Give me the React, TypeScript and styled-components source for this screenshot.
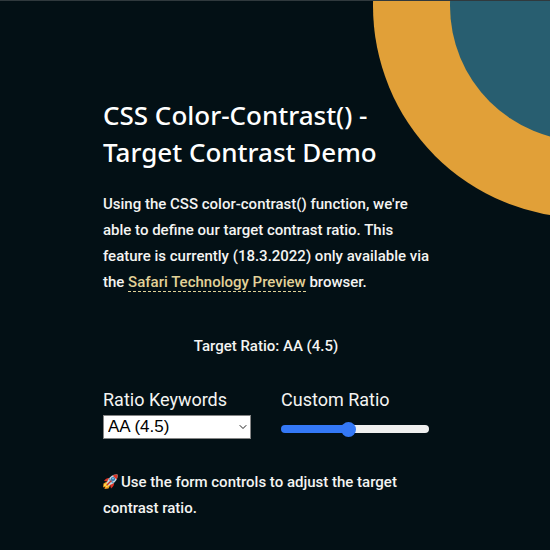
import React, { useState } from "react";
import styled, { createGlobalStyle } from "styled-components";
import { ChevronDown } from "lucide-react";

const GlobalStyle = createGlobalStyle`
  *, *::before, *::after { box-sizing: border-box; }
  body {
    margin: 0;
    background: #031015;
    color: #f4f4f2;
    font-family: Roboto, "Liberation Sans", sans-serif;
  }
`;

const Page = styled.div`
  position: relative;
  min-height: 100vh;
  overflow: hidden;
  border-top: 1px solid #30393d;
`;

const Rings = styled.svg`
  position: absolute;
  top: 0;
  right: 0;
  width: 180px;
  height: 220px;
`;

const Main = styled.main`
  position: relative;
  padding: 96px 113px 28px 103px;
`;

const Title = styled.h1`
  margin: 0 0 20px;
  font-family: "Noto Sans", sans-serif;
  font-size: 26px;
  font-weight: 500;
  line-height: 37px;
  color: #fff;
`;

const Text = styled.p`
  margin: 0;
  font-size: 15px;
  font-weight: 500;
  line-height: 26px;
`;

const Demo = styled.section`
  margin: 38px 8px 30px 0;
`;

const Output = styled.output`
  display: block;
  margin-bottom: 29px;
  font-size: 15px;
  font-weight: 500;
  line-height: 26px;
  text-align: center;
`;

const Controls = styled.form`
  display: grid;
  grid-template-columns: 1fr 1fr;
  column-gap: 30px;
`;

const Field = styled.div`
  display: flex;
  flex-direction: column;
  gap: 3px;
`;

const Label = styled.label`
  font-size: 18px;
  line-height: 24px;
`;

const SelectBox = styled.div`
  display: grid;
  align-items: center;

  > * { grid-area: 1 / 1; }

  svg {
    justify-self: end;
    margin-right: 2px;
    pointer-events: none;
    color: #222;
  }
`;

const Select = styled.select`
  appearance: none;
  width: 100%;
  height: 24px;
  padding: 0 16px 0 4px;
  border: 1px solid #858585;
  border-radius: 0;
  background: #fff;
  color: #000;
  font-family: "Liberation Sans", Arial, sans-serif;
  font-size: 17px;
  line-height: 22px;
`;

const Range = styled.input`
  appearance: none;
  width: 100%;
  height: 8px;
  margin: 10px 0 0;
  border-radius: 4px;
  background: linear-gradient(to right, #3478f6 var(--fill), #efefef var(--fill));

  &::-webkit-slider-thumb {
    appearance: none;
    width: 15px;
    height: 15px;
    border-radius: 50%;
    background: #3478f6;
  }
`;

const Link = styled.a`
  color: #e2d298;
  text-decoration: none;
  border-bottom: 1px dashed #e2d298;
`;

const RocketIcon = styled.svg`
  width: 15px;
  height: 15px;
  margin-right: 3px;
  vertical-align: -2px;
`;

const Rocket = () => (
  <RocketIcon viewBox="0 0 30 30" role="img" aria-label="Rocket">
    <path d="M8 15 1 19l-1 8 4-2-1 5 8-1 4-8z" fill="#f39a20" />
    <path d="M7 18 2 21l0 4 4-2 0 4 6-3 1-4z" fill="#ffe04a" />
    <path d="M14 8C9 7 5 9 2 14l7 1zM22 16c1 5-1 9-6 13l-2-8z" fill="#dc3426" />
    <path d="M29 1C21 0 15 4 11 10l-4 8 5 5 8-4c6-4 10-10 9-18z" fill="#c5d9e4" />
    <path d="M29 1c-4 0-7 1-10 2l8 8c2-3 2-6 2-10z" fill="#d73527" />
    <path d="m11 11 8 8 3-2L13 8z" fill="#6c9fc1" />
    <circle cx="20" cy="10" r="4" fill="#286aa5" />
    <circle cx="20" cy="9" r="2" fill="#75c9ef" />
    <path d="m8 22 8-8" stroke="#cb2f22" strokeWidth="3" strokeLinecap="round" />
  </RocketIcon>
);

const keywords: Record<string, string> = {
  "4.5": "AA (4.5)",
  "3": "AA-large (3)",
  "7": "AAA (7)",
};

export default function App() {
  const [ratio, setRatio] = useState("4.5");
  return (
    <>
      <GlobalStyle />
      <Page>
        <Rings viewBox="370 1 180 220" aria-hidden="true">
          <circle cx="585" cy="6" r="212" fill="#e1a038" />
          <circle cx="585" cy="6" r="135" fill="#285e70" />
        </Rings>
        <Main>
          <Title>CSS Color-Contrast() - Target Contrast Demo</Title>
          <Text>
            Using the CSS color-contrast() function, we're able to define our target
            contrast ratio. This feature is currently (18.3.2022) only available via
            the <Link href="#preview">Safari Technology Preview</Link> browser.
          </Text>
          <Demo>
            <Output htmlFor="keywords custom">
              Target Ratio: {keywords[ratio] ?? ratio}
            </Output>
            <Controls>
              <Field>
                <Label htmlFor="keywords">Ratio Keywords</Label>
                <SelectBox>
                  <Select id="keywords" value={ratio} onChange={(e) => setRatio(e.target.value)}>
                    <option value="4.5">AA (4.5)</option>
                    <option value="3">AA-large (3)</option>
                    <option value="7">AAA (7)</option>
                  </Select>
                  <ChevronDown size={12} strokeWidth={2} aria-hidden="true" />
                </SelectBox>
              </Field>
              <Field>
                <Label htmlFor="custom">Custom Ratio</Label>
                <Range
                  id="custom"
                  type="range"
                  min="0"
                  max="10"
                  step="0.5"
                  value={ratio}
                  onChange={(e) => setRatio(e.target.value)}
                  style={{ "--fill": `${Number(ratio) * 10}%` } as React.CSSProperties}
                />
              </Field>
            </Controls>
          </Demo>
          <Text>
            <Rocket />
            Use the form controls to adjust the target contrast ratio.
          </Text>
        </Main>
      </Page>
    </>
  );
}
